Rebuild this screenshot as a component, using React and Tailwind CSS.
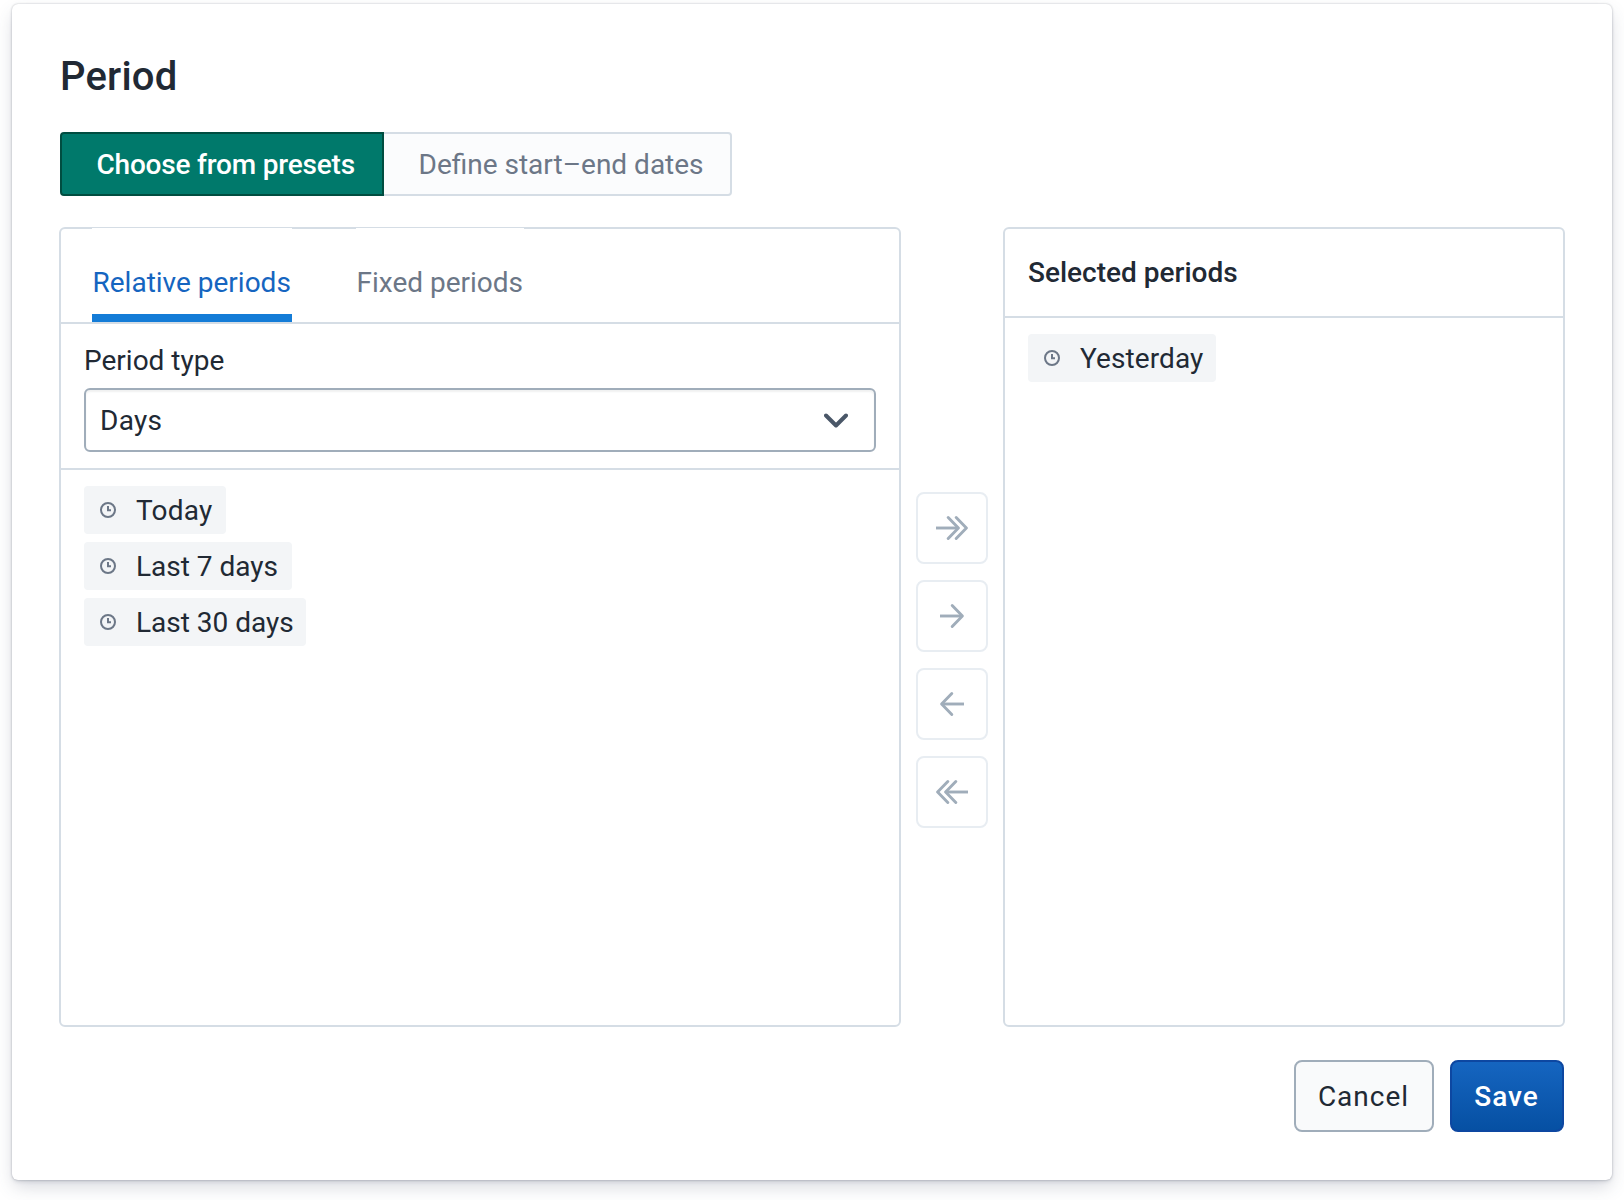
function ClockIcon() {
  return (
    <svg width="16" height="16" viewBox="0 0 16 16" fill="none" stroke="#6c7787" strokeWidth="2" className="shrink-0">
      <circle cx="8" cy="8" r="7" />
      <path d="M8 4v4.3h3" />
    </svg>
  )
}

function Chip({ width, spacing = '', children }) {
  return (
    <li className={`flex h-12 items-center gap-5 rounded bg-[#f3f5f7] pl-4 whitespace-nowrap ${width} ${spacing}`}>
      <ClockIcon />
      <span className="pt-0.5">{children}</span>
    </li>
  )
}

const arrows = {
  'Add all': { shaft: 'M0 16h22', heads: 'M12.2 5.6L22.4 16L12.2 26.4M20.2 5.6L30.4 16L20.2 26.4' },
  Add: { shaft: 'M4 16h22', heads: 'M16.2 5.6L26.4 16L16.2 26.4' },
  Remove: { shaft: 'M28 16H6', heads: 'M15.8 5.6L5.6 16L15.8 26.4' },
  'Remove all': { shaft: 'M32 16H10', heads: 'M19.8 5.6L9.6 16L19.8 26.4M11.8 5.6L1.6 16L11.8 26.4' },
}

function TransferButton({ name }) {
  return (
    <button aria-label={name} className="flex size-[72px] items-center justify-center rounded-lg border-2 border-[#e8edf2] bg-white">
      <svg width="32" height="32" viewBox="0 0 32 32" fill="none" stroke="#a0adba" strokeWidth="2.9" strokeLinejoin="round">
        <path d={arrows[name].shaft} />
        <path d={arrows[name].heads} strokeLinecap="round" />
      </svg>
    </button>
  )
}

function Tab({ active, width, children }) {
  return (
    <button className={`relative z-10 -mt-px flex h-[94px] flex-col bg-white ${width} ${active ? 'text-[#1565c0]' : 'text-[#6c7787]'}`}>
      <span className="flex grow items-center pt-6 pl-[0.5px] whitespace-nowrap">{children}</span>
      <span className={`h-2 w-full ${active ? 'bg-[#147cd7]' : ''}`} />
    </button>
  )
}

export default function App() {
  return (
    <div className="h-[1200px] w-[1624px] overflow-hidden bg-white pt-1 pl-3 text-[28px] leading-8 text-[#212934] antialiased [font-family:Roboto,sans-serif]">
      <main className="flex h-[1176px] w-[1600px] flex-col rounded-[6px] bg-white pt-[49px] pr-[47px] pl-[47px] shadow-[0_0_2px_rgba(33,41,52,0.3),0_2px_4px_-1px_rgba(64,75,100,0.2),0_8px_18px_-2px_rgba(64,75,100,0.22)]">
        <h1 className="ml-px h-12 text-[40px] leading-12 font-medium tracking-[0.2px]">Period</h1>

        <div className="mt-[31px] ml-px flex h-16">
          <button className="flex w-[324px] items-center rounded-l border-2 border-[#004d40] bg-[#00796b] pt-0.5 pl-[34.5px] font-medium tracking-[-0.2px] whitespace-nowrap text-white">
            Choose from presets
          </button>
          <button className="flex w-[348px] items-center rounded-r border-2 border-l-0 border-[#d5dde5] bg-[#fbfcfd] pt-0.5 pl-[34.5px] whitespace-nowrap text-[#6c7787]">
            Define start–end dates
          </button>
        </div>

        <div className="mt-[31px] flex h-[800px] justify-between">
          <section className="flex w-[842px] flex-col rounded-[6px] border-2 border-[#d5dde5]">
            <div className="flex h-[95px] gap-16 border-b-2 border-[#d5dde5] pl-[31px]">
              <Tab active width="w-[200px]">Relative periods</Tab>
              <Tab width="w-[168px]">Fixed periods</Tab>
            </div>
            <div className="flex h-[146px] flex-col border-b-2 border-[#d5dde5] px-[23px]">
              <label className="mt-[21px]">Period type</label>
              <div className="mt-[11px] flex h-16 items-center justify-between rounded-[6px] border-2 border-[#a0adba] pr-[26px] pl-[14px] shadow-[inset_0_2px_2px_rgba(48,54,60,0.07)]">
                <span className="pt-0.5 tracking-[0.3px]">Days</span>
                <svg width="24" height="24" viewBox="0 0 24 24" fill="none" stroke="#4a5768" strokeWidth="4" strokeLinecap="round" strokeLinejoin="round">
                  <path d="M2 7.5l10 10l10-10" />
                </svg>
              </div>
            </div>
            <ul className="flex flex-col gap-2 pt-4 pl-[23px]">
              <Chip width="w-[142px]" spacing="tracking-[0.2px]">Today</Chip>
              <Chip width="w-[208px]">Last 7 days</Chip>
              <Chip width="w-[222px]">Last 30 days</Chip>
            </ul>
          </section>

          <div className="flex flex-col gap-4 pt-[265px]">
            {Object.keys(arrows).map((name) => (
              <TransferButton key={name} name={name} />
            ))}
          </div>

          <section className="flex w-[562px] flex-col rounded-[6px] border-2 border-[#d5dde5]">
            <h2 className="flex h-[89px] items-center border-b-2 border-[#d5dde5] pl-[23px] font-medium">Selected periods</h2>
            <ul className="pt-4 pl-[23px]">
              <Chip width="w-[188px]" spacing="tracking-[0.1px]">Yesterday</Chip>
            </ul>
          </section>
        </div>

        <div className="mt-[33px] mr-px flex h-[72px] justify-end gap-4 tracking-[1px]">
          <button className="w-[140px] rounded-lg border-2 border-[#a0adba] bg-[#f9fafb] pt-0.5 pr-px">Cancel</button>
          <button className="w-[114px] rounded-lg border-2 border-[#0d47a1] bg-linear-to-b from-[#1565c0] to-[#0650a3] pt-0.5 pr-px font-medium text-white">Save</button>
        </div>
      </main>
    </div>
  )
}
